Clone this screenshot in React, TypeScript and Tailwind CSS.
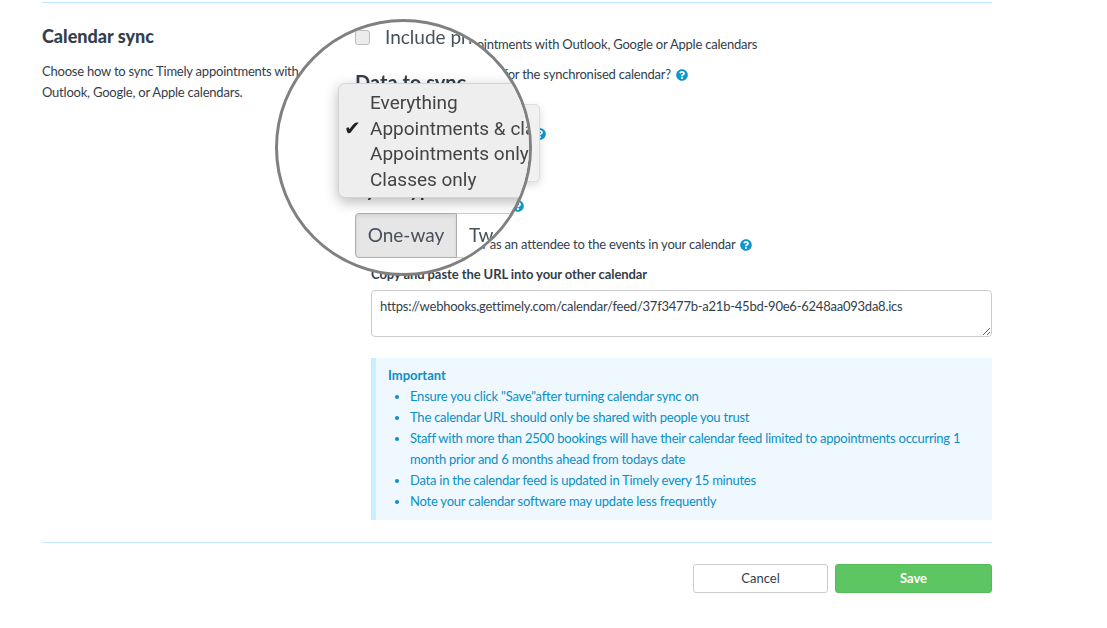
import { FaQuestionCircle } from 'react-icons/fa'

const lato = { fontFamily: 'Lato, "Open Sans", sans-serif' }

function Help({ className = '' }: { className?: string }) {
  return <FaQuestionCircle className={`text-[#0e96ce] text-[12px] shrink-0 ${className}`} />
}

// what sits inside the magnifying glass
function Lens() {
  return (
    <div className="absolute left-[275px] top-[19px] w-[257px] h-[257px] rounded-full border-[3px] border-[#808080] bg-white overflow-hidden z-20">
      <div className="relative pl-[77px] pt-[3px] text-[#46515c] tracking-normal whitespace-nowrap blur-[0.4px]">
        <div className="flex items-center h-[24px]">
          <span className="w-[15px] h-[15px] rounded-[3px] bg-[#ececec] border border-[#bdbdbd] shrink-0" />
          <span className="ml-[15px] text-[19px] leading-[24px]">Include private appointments</span>
        </div>
        <div className="mt-[21px] text-[20px] leading-[24px] font-bold text-[#333e4a]">Data to sync</div>
        <div className="mt-[82px] text-[20px] leading-[24px] font-bold text-[#333e4a]">Sync type</div>
        <div className="flex mt-[13px] text-[19px]">
          <div className="w-[102px] h-[45px] shrink-0 flex items-center justify-center pb-[3px] bg-[#e6e6e6] border border-[#adadad] rounded-l-[4px] shadow-[inset_0_2px_4px_rgba(0,0,0,0.08)]">
            One-way
          </div>
          <div className="w-[120px] h-[45px] shrink-0 flex items-center pl-[12px] pb-[3px] bg-white border border-[#cccccc] border-l-0 rounded-r-[4px]">
            Two-way
          </div>
        </div>

        <div
          className="absolute left-[60px] top-[61px] w-[300px] h-[115px] pt-[6px] bg-[#eeeeee] border border-[#d4d4d4] rounded-[7px] shadow-[0_4px_14px_rgba(0,0,0,0.28)] text-[#444444] text-[19px]"
          style={{ fontFamily: 'Roboto, sans-serif' }}
        >
          <div className="h-[25.5px] leading-[25.5px] pl-[31px]">Everything</div>
          <div className="relative h-[25.5px] leading-[25.5px] pl-[31px]">
            <span className="absolute left-[5px] top-0 text-[#222222] text-[20px]" style={{ fontFamily: '"DejaVu Sans", sans-serif' }}>✔</span>
            Appointments &amp; classes
          </div>
          <div className="h-[25.5px] leading-[25.5px] pl-[31px]">Appointments only</div>
          <div className="h-[25.5px] leading-[25.5px] pl-[31px]">Classes only</div>
        </div>
      </div>
    </div>
  )
}

export default function App() {
  return (
    <div className="relative w-[1107px] h-[628px] bg-white overflow-hidden text-[13px] leading-[21px] tracking-[-0.22px] text-[#333e4a]" style={lato}>
      <div className="w-[950px] ml-[42px]">
        <div className="h-[1px] mt-[2px] bg-[#bfe6fd]" />

        <div className="flex">
          <div className="w-[329px] shrink-0 pt-[22px]">
            <h2 className="text-[18px] leading-[22px] font-black tracking-normal text-[#33404d]">Calendar sync</h2>
            <p className="mt-[14px] w-[270px]">Choose how to sync Timely appointments with Outlook, Google, or Apple calendars.</p>
          </div>

          <div className="flex-1 pt-[31px]">
            <div className="pl-[17px] h-[21px] whitespace-nowrap">Sync Timely appointments with Outlook, Google or Apple calendars</div>
            <div className="flex items-center gap-[5px] pl-[9px] h-[21px] mt-[9px] whitespace-nowrap">
              <span>Which data to include for the synchronised calendar?</span>
              <Help />
            </div>
            <div className="flex items-center justify-end w-[175px] h-[21px] mt-[38px]">
              <Help />
            </div>
            <div className="flex items-center justify-end w-[153px] h-[21px] mt-[51px]">
              <Help />
            </div>
            <div className="flex items-center gap-[5px] pl-[17px] h-[21px] mt-[18px] whitespace-nowrap">
              <span>Add staff member as an attendee to the events in your calendar</span>
              <Help />
            </div>
            <div className="h-[21px] mt-[9px] font-bold tracking-[-0.08px]">Copy and paste the URL into your other calendar</div>

            <textarea
              readOnly
              defaultValue="https://webhooks.gettimely.com/calendar/feed/37f3477b-a21b-45bd-90e6-6248aa093da8.ics"
              className="block w-full h-[47px] mt-[5px] px-[8px] py-[5px] border border-[#cccccc] rounded-[4px] bg-white text-[13px] leading-[21px] tracking-[-0.235px] text-[#333e4a] outline-none"
            />

            <div className="mt-[21px] h-[162px] pt-[7px] pl-[12px] pr-[15px] bg-[#eef8fe] border-l-[5px] border-[#c8f0fc] text-[#0b8fc4]">
              <div className="font-bold tracking-normal">Important</div>
              <ul className="list-disc pl-[22px]">
                <li>Ensure you click "Save"after turning calendar sync on</li>
                <li>The calendar URL should only be shared with people you trust</li>
                <li className="tracking-[-0.24px]">Staff with more than 2500 bookings will have their calendar feed limited to appointments occurring 1 month prior and 6 months ahead from todays date</li>
                <li className="tracking-[-0.25px]">Data in the calendar feed is updated in Timely every 15 minutes</li>
                <li>Note your calendar software may update less frequently</li>
              </ul>
            </div>
          </div>
        </div>

        <div className="h-[1px] mt-[22px] bg-[#c5ecfc]" />

        <div className="flex justify-end gap-[7px] mt-[21px] tracking-normal">
          <button className="w-[135px] h-[29px] bg-white border border-[#cccccc] rounded-[3px] text-[#333e4a]">Cancel</button>
          <button className="w-[157px] h-[29px] bg-[#5dc562] border border-[#53bd58] rounded-[3px] text-white font-bold">Save</button>
        </div>
      </div>

      {/* real dropdown peeking out from behind the glass */}
      <div className="absolute left-[420px] top-[104px] w-[120px] h-[78px] bg-[#f1f1f1] border border-[#dddddd] rounded-[5px] shadow-[0_3px_8px_rgba(0,0,0,0.15)] z-10" />
      <Lens />
    </div>
  )
}
